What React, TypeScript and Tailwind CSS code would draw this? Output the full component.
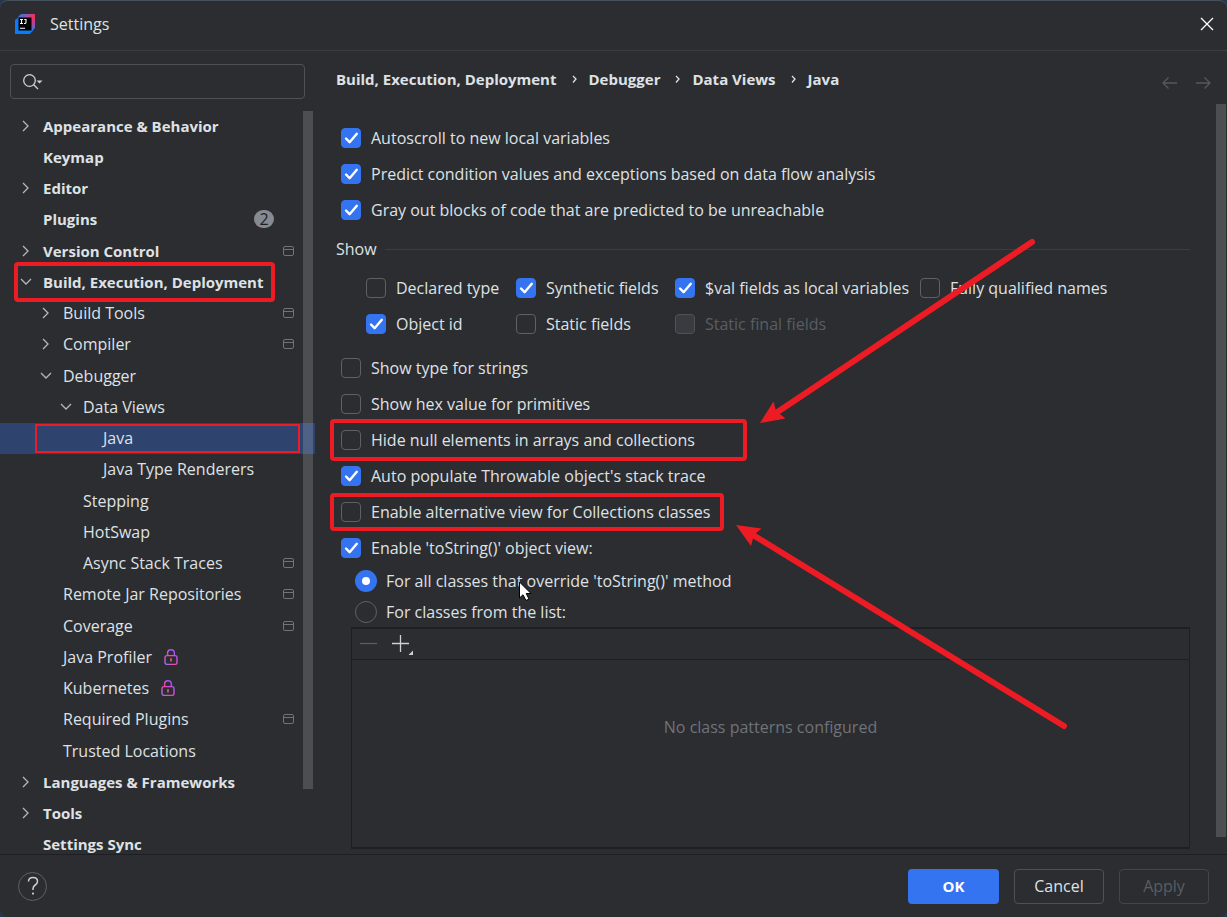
import { useState } from "react";
import type { ReactNode } from "react";
import clsx from "clsx";

type Mark = "project" | "lock" | "badge";
type Item = { label: string; depth: number; arrow?: "open" | "closed"; mark?: Mark; selected?: boolean; boxed?: boolean };

const ITEMS: Item[] = [
  { label: "Appearance & Behavior", depth: 0, arrow: "closed" },
  { label: "Keymap", depth: 0 },
  { label: "Editor", depth: 0, arrow: "closed" },
  { label: "Plugins", depth: 0, mark: "badge" },
  { label: "Version Control", depth: 0, arrow: "closed", mark: "project" },
  { label: "Build, Execution, Deployment", depth: 0, arrow: "open", boxed: true },
  { label: "Build Tools", depth: 1, arrow: "closed", mark: "project" },
  { label: "Compiler", depth: 1, arrow: "closed", mark: "project" },
  { label: "Debugger", depth: 1, arrow: "open" },
  { label: "Data Views", depth: 2, arrow: "open" },
  { label: "Java", depth: 3, selected: true },
  { label: "Java Type Renderers", depth: 3 },
  { label: "Stepping", depth: 2 },
  { label: "HotSwap", depth: 2 },
  { label: "Async Stack Traces", depth: 2, mark: "project" },
  { label: "Remote Jar Repositories", depth: 1, mark: "project" },
  { label: "Coverage", depth: 1, mark: "project" },
  { label: "Java Profiler", depth: 1, mark: "lock" },
  { label: "Kubernetes", depth: 1, mark: "lock" },
  { label: "Required Plugins", depth: 1, mark: "project" },
  { label: "Trusted Locations", depth: 1 },
  { label: "Languages & Frameworks", depth: 0, arrow: "closed" },
  { label: "Tools", depth: 0, arrow: "closed" },
  { label: "Settings Sync", depth: 0 },
];

const INDENT = ["pl-[18px]", "pl-[38px]", "pl-[58px]", "pl-[78px]"];
const CRUMBS = ["Build, Execution, Deployment", "Debugger", "Data Views", "Java"];

function AppLogo() {
  return (
    <svg width="20" height="20" viewBox="0 0 20 20" aria-hidden="true">
      <defs>
        <linearGradient id="logoEdge" x1="4" y1="3" x2="19" y2="16" gradientUnits="userSpaceOnUse">
          <stop offset="0" stopColor="#3f6fd8" />
          <stop offset="0.3" stopColor="#a8509f" />
          <stop offset="0.55" stopColor="#fb2a5c" />
          <stop offset="1" stopColor="#4a6ce0" />
        </linearGradient>
      </defs>
      <path d="M6 0H20V14L15 19L3 12V3Z" fill="url(#logoEdge)" />
      <path d="M0 6L4 3L7 6L16 16L19 15.500L15 20H0Z" fill="#087cfa" />
      <rect x="3.5" y="3.500" width="13" height="13" fill="#000" />
      <path d="M5 5.5H8M6.5 5.5V9.5M5 9.5H8M9.3 5.5H11V8.6Q11 9.6 9 9.5M5 14.2H10" stroke="#fff" strokeWidth="1.1" fill="none" />
    </svg>
  );
}

function Arrow({ kind }: { kind: "open" | "closed" }) {
  return (
    <svg width="16" height="16" viewBox="0 0 16 16" fill="none" stroke="#b4b8bf" strokeWidth="1.3" aria-hidden="true">
      <path d={kind === "open" ? "M3 5L8 10L13 5" : "M5 3L10 8L5 13"} />
    </svg>
  );
}

function ProjectIcon() {
  return (
    <svg width="12" height="12" viewBox="0 0 12 12" fill="none" stroke="#6f737a" aria-hidden="true">
      <rect x="0.5" y="1.5" width="10" height="9" rx="1.5" />
      <path d="M0.5 4.5H10.5" />
    </svg>
  );
}

function LockIcon() {
  return (
    <svg width="14" height="16" viewBox="0 0 14 16" fill="none" aria-hidden="true">
      <defs>
        <linearGradient id="lock" x1="0" y1="16" x2="13" y2="4" gradientUnits="userSpaceOnUse">
          <stop offset="0" stopColor="#5b7cf7" />
          <stop offset="0.2" stopColor="#b765e8" />
          <stop offset="0.42" stopColor="#ec4a8a" />
          <stop offset="0.7" stopColor="#d84be8" />
          <stop offset="1" stopColor="#8a5bf5" />
        </linearGradient>
      </defs>
      <rect x="1" y="6.6" width="12" height="8.8" rx="2" stroke="url(#lock)" strokeWidth="1.4" />
      <path d="M3.6 6.5V4.2A3.4 3.4 0 0 1 10.4 4.2V6.5" stroke="url(#lock)" strokeWidth="1.4" />
      <path d="M7 9.3V12.5" stroke="#d9557b" strokeWidth="1.8" />
    </svg>
  );
}

function TreeRow({ item }: { item: Item }) {
  return (
    <li className={clsx("relative flex", item.selected && "bg-[#2e436e]")}>
      <button
        type="button"
        className={clsx(
          "flex w-full items-center pr-5 text-left whitespace-nowrap",
          INDENT[item.depth],
          item.depth === 0 && "text-[15px] font-bold",
        )}
      >
        <span className="mr-[9px] flex w-4 shrink-0">{item.arrow && <Arrow kind={item.arrow} />}</span>
        <span>{item.label}</span>
        {item.mark === "lock" && (
          <span className="ml-3">
            <LockIcon />
          </span>
        )}
        {item.mark === "project" && (
          <span className="ml-auto">
            <ProjectIcon />
          </span>
        )}
        {item.mark === "badge" && (
          <span className="mr-[21px] ml-auto flex h-[18px] w-5 items-center justify-center rounded-full bg-[#868a91] text-base leading-5 font-normal text-[#1e1f22]">
            2
          </span>
        )}
      </button>
      {item.boxed && (
        <span className="pointer-events-none absolute -inset-y-1 right-10 left-3.5 rounded-sm border-4 border-[#ed1c24]" />
      )}
      {item.selected && (
        <span className="pointer-events-none absolute inset-y-px right-[15px] left-[35px] border-2 border-[#ed1c24]" />
      )}
    </li>
  );
}

function Check({ label, on = false, disabled = false, children }: { label: string; on?: boolean; disabled?: boolean; children?: ReactNode }) {
  const [checked, setChecked] = useState(on);
  return (
    <div className="relative flex h-9 items-center">
      <label className={clsx("flex items-center gap-2.5 whitespace-nowrap", disabled && "text-[#5a5d63]")}>
        <span className="grid size-5 shrink-0">
          <input
            type="checkbox"
            checked={checked}
            disabled={disabled}
            onChange={(e) => setChecked(e.target.checked)}
            className="peer col-start-1 row-start-1 size-5 appearance-none rounded border border-[#5e6065] checked:border-[#3574f0] checked:bg-[#3574f0] disabled:border-[#4e5157] disabled:bg-[#393b40]"
          />
          <svg
            viewBox="0 0 20 20"
            className="pointer-events-none col-start-1 row-start-1 hidden size-5 peer-checked:block"
            fill="none"
            stroke="#fff"
            strokeWidth="2.4"
            strokeLinecap="round"
            strokeLinejoin="round"
            aria-hidden="true"
          >
            <path d="M5 10.5L8.6 14.2L15.8 5.8" />
          </svg>
        </span>
        <span>{label}</span>
      </label>
      {children}
    </div>
  );
}

function Radio({ label, on = false }: { label: string; on?: boolean }) {
  return (
    <label className="flex h-[31px] items-center gap-[9px]">
      <input
        type="radio"
        name="classes"
        defaultChecked={on}
        className="size-[22px] appearance-none rounded-full border border-[#5e6065] checked:border-[7px] checked:border-[#3574f0] checked:bg-white"
      />
      <span>{label}</span>
    </label>
  );
}

export default function App() {
  return (
    <div className="relative h-screen overflow-hidden bg-[#27364f] font-['Open_Sans','Noto_Sans',sans-serif] text-base leading-5 text-[#dfe1e5]">
      <div className="flex h-full flex-col overflow-hidden rounded-lg border-t border-[#45505c] bg-[#2b2d30]">
        <header className="flex h-[50px] shrink-0 items-center border-b border-[#3b3d41] pr-[11px] pb-[3px] pl-[15px]">
          <AppLogo />
          <h1 className="ml-[15px]">Settings</h1>
          <button type="button" aria-label="Close" className="ml-auto p-0.5">
            <svg width="14" height="14" viewBox="0 0 14 14" stroke="#fff" strokeWidth="1.3" aria-hidden="true">
              <path d="M1 1L13 13M13 1L1 13" />
            </svg>
          </button>
        </header>

        <div className="flex min-h-0 flex-1">
          <aside className="flex w-[315px] shrink-0 flex-col">
            <label className="mx-2.5 mt-[13px] flex h-[35px] shrink-0 items-center rounded border border-[#4e5157] px-3">
              <svg width="20" height="16" viewBox="0 0 20 16" fill="none" stroke="#ced0d6" strokeWidth="1.3" aria-hidden="true">
                <circle cx="6.5" cy="6.5" r="5.8" />
                <path d="M10.7 10.7L15 15" />
                <path d="M13.5 6.500H19.5L16.5 9.500Z" fill="#ced0d6" stroke="none" />
              </svg>
              <input type="text" aria-label="Search settings" className="ml-1 min-w-0 flex-1 bg-transparent outline-none" />
            </label>
            <div className="relative mt-[11px] min-h-0 flex-1">
              <nav className="h-full overflow-y-auto [scrollbar-width:none]">
                <ul className="grid h-[750px] auto-rows-fr">
                  {ITEMS.map((item) => (
                    <TreeRow key={item.label} item={item} />
                  ))}
                </ul>
              </nav>
              <div className="pointer-events-none absolute top-px right-0.5 bottom-[65px] w-2.5 bg-white/16" />
            </div>
          </aside>

          <main className="relative min-w-0 flex-1">
            <div className="flex items-center pt-[17px] pr-4 pl-[21px]">
              <nav className="flex items-center text-[15px] font-bold whitespace-nowrap">
                {CRUMBS.map((crumb, i) => (
                  <span key={crumb} className="flex items-center">
                    {i > 0 && (
                      <svg width="32" height="10" viewBox="0 0 32 10" fill="none" stroke="#dfe1e5" strokeWidth="1.3" aria-hidden="true">
                        <path d="M16 2L19 5L16 8.5" />
                      </svg>
                    )}
                    <a href="#">{crumb}</a>
                  </span>
                ))}
              </nav>
              <div className="mt-2 ml-auto flex gap-[17px]">
                <button type="button" aria-label="Back">
                  <svg width="16" height="14" viewBox="0 0 16 14" fill="none" stroke="#56585d" strokeWidth="1.3" aria-hidden="true">
                    <path d="M15 7H1M6.5 1.5L1 7L6.5 12.5" />
                  </svg>
                </button>
                <button type="button" aria-label="Forward">
                  <svg width="16" height="14" viewBox="0 0 16 14" fill="none" stroke="#56585d" strokeWidth="1.3" aria-hidden="true">
                    <path d="M1 7H15M9.5 1.5L15 7L9.5 12.5" />
                  </svg>
                </button>
              </div>
            </div>

            <form className="flex flex-col pt-[30px] pr-[37px] pl-[21px]" onSubmit={(e) => e.preventDefault()}>
              <div className="pl-[5px]">
                <Check label="Autoscroll to new local variables" on />
                <Check label="Predict condition values and exceptions based on data flow analysis" on />
                <Check label="Gray out blocks of code that are predicted to be unreachable" on />
              </div>
              <fieldset>
                <legend className="flex h-[42px] w-full items-center gap-2">
                  Show
                  <span className="h-px flex-1 bg-[#3b3d41]" />
                </legend>
                <div className="grid grid-cols-[150px_159px_245px_auto] pl-[30px]">
                  <Check label="Declared type" />
                  <Check label="Synthetic fields" on />
                  <Check label="$val fields as local variables" on />
                  <Check label="Fully qualified names" />
                  <Check label="Object id" on />
                  <Check label="Static fields" />
                  <Check label="Static final fields" disabled />
                </div>
              </fieldset>
              <div className="mt-2 pl-[5px]">
                <Check label="Show type for strings" />
                <Check label="Show hex value for primitives" />
                <Check label="Hide null elements in arrays and collections">
                  <span className="pointer-events-none absolute -inset-y-[3px] -left-[11px] w-[417px] rounded-sm border-4 border-[#ed1c24]" />
                </Check>
                <Check label="Auto populate Throwable object's stack trace" on />
                <Check label="Enable alternative view for Collections classes">
                  <span className="pointer-events-none absolute -inset-y-px -left-[11px] w-[394px] rounded-sm border-4 border-[#ed1c24]" />
                </Check>
                <Check label="Enable 'toString()' object view:" on />
              </div>
              <div className="-mt-px pl-[19px]">
                <Radio label="For all classes that override 'toString()' method" on />
                <Radio label="For classes from the list:" />
              </div>
              <section className="ml-[15px] border-x border-y-2 border-[#1e1f22]">
                <div className="flex h-[31px] items-center gap-3 border-b border-[#1e1f22] pb-0.5 pl-2">
                  <button type="button" aria-label="Remove" disabled>
                    <svg width="18" height="20" viewBox="0 0 18 20" stroke="#5a5d63" strokeWidth="1.3" aria-hidden="true">
                      <path d="M0 10.5H17" />
                    </svg>
                  </button>
                  <button type="button" aria-label="Add">
                    <svg width="24" height="24" viewBox="0 0 24 24" stroke="#ced0d6" strokeWidth="1.3" aria-hidden="true">
                      <path d="M2 12.5H19M10.5 4V21" />
                      <path d="M23 19.5V24H18.5Z" fill="#ced0d6" stroke="none" />
                    </svg>
                  </button>
                </div>
                <p className="flex h-[187px] items-start justify-center pt-[57px] text-[#6f737a]">No class patterns configured</p>
              </section>
            </form>
            <div className="pointer-events-none absolute top-[53px] right-px bottom-[17px] w-2.5 bg-[#4d4e51]" />
          </main>
        </div>

        <footer className="flex h-[63px] shrink-0 items-center gap-[15px] border-t border-[#1e1f22] pr-[18px] pl-[18px]">
          <button type="button" aria-label="Help" className="mr-auto flex size-[29px] items-center justify-center rounded-full border border-[#5e6065]">
            <svg width="12" height="20" viewBox="0 0 12 20" fill="none" stroke="#ced0d6" strokeWidth="1.5" aria-hidden="true">
              <path d="M1.5 5.5Q1.5 1.5 6 1.5T10.5 5.3Q10.5 7.5 8.2 9T6 12.8V14" />
              <circle cx="6" cy="17.6" r="1.1" fill="#ced0d6" stroke="none" />
            </svg>
          </button>
          <button type="button" className="h-[35px] w-[91px] rounded bg-[#3574f0] text-[15px] font-bold text-white">
            OK
          </button>
          <button type="button" className="h-[35px] w-[90px] rounded border border-[#4e5157]">
            Cancel
          </button>
          <button type="button" disabled className="h-[35px] w-[90px] rounded border border-[#43454a] text-[#5a5d63]">
            Apply
          </button>
        </footer>
      </div>

      <svg className="pointer-events-none absolute top-0 left-0" width="1227" height="917" viewBox="0 0 1227 917" aria-hidden="true">
        <g stroke="#ed1c24" strokeWidth="6" strokeLinecap="round">
          <path d="M1032 242L776 413" />
          <path d="M1064 726L753 535" />
        </g>
        <g fill="#ed1c24">
          <path d="M760 423L773.5 401.500L776 411L785.500 418.500Z" />
          <path d="M736 525L761.500 528.500L754 535L751 546Z" />
        </g>
        <path d="M519.500 582V598L523 594.800L526 600.500L529 599L526.200 593.500H531Z" fill="#fff" stroke="#000" strokeWidth="1" />
      </svg>
    </div>
  );
}
